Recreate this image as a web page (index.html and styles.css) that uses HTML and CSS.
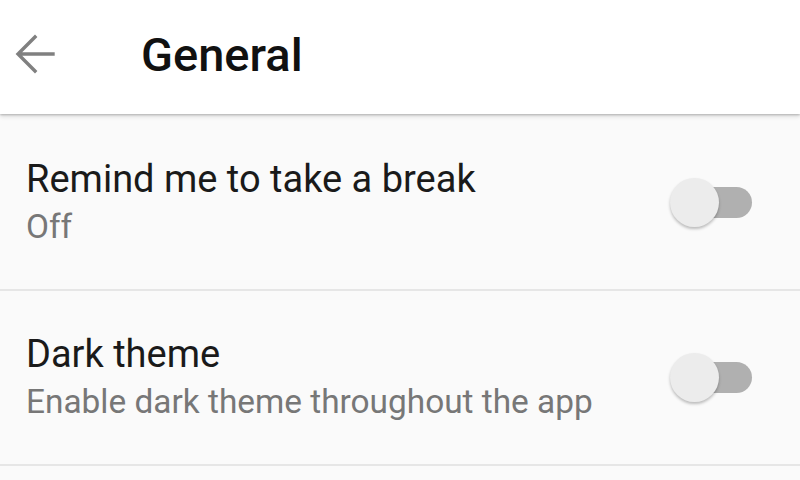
FILE: index.html
```html
<!DOCTYPE html>
<html lang="en">
<head>
  <meta charset="UTF-8" />
  <meta name="viewport" content="width=device-width, initial-scale=1.0" />
  <title>General</title>
  <link rel="stylesheet" href="styles.css">
</head>
<body>

  <header class="toolbar">
    <button class="back" aria-label="Back">
      <svg width="40" height="40" viewBox="0 0 40 40">
        <path d="M38 20H4 M20 3L3 20L20 37" fill="none" stroke="#808080" stroke-width="3.4" stroke-linecap="square" />
      </svg>
    </button>
    <h1>General</h1>
  </header>

  <main class="settings">
    <div class="row">
      <div class="text">
        <p class="title">Remind me to take a break</p>
        <p class="summary">Off</p>
      </div>
      <div class="switch"><span class="thumb"></span></div>
    </div>

    <div class="row">
      <div class="text">
        <p class="title">Dark theme</p>
        <p class="summary">Enable dark theme throughout the app</p>
      </div>
      <div class="switch"><span class="thumb"></span></div>
    </div>
  </main>

</body>
</html>
```

FILE: styles.css
```css
* {
  margin: 0;
  padding: 0;
  box-sizing: border-box;
}

body {
  width: 800px;
  height: 480px;
  overflow: hidden;
  background: #fafafa;
  font-family: Roboto, 'Noto Sans', sans-serif;
  color: #1a1a1a;
}

.toolbar {
  height: 114px;
  background: #fff;
  display: flex;
  align-items: center;
  padding-left: 15px;
  box-shadow: 0 1px 2px rgba(0, 0, 0, 0.22), 0 3px 4px rgba(0, 0, 0, 0.1);
  position: relative;
  z-index: 1;
}

.back {
  width: 40px;
  height: 40px;
  border: none;
  background: none;
  display: flex;
  margin-top: -6px;
}

.toolbar h1 {
  margin-left: 86px;
  font-size: 47px;
  font-weight: 500;
  color: #111;
  margin-top: -6px;
}

.settings {
  padding-top: 2px;
}

.row {
  height: 175px;
  display: flex;
  align-items: center;
  justify-content: space-between;
  padding: 0 48px 0 26px;
  border-bottom: 2px solid #e6e6e6;
}

.title {
  font-size: 38px;
  line-height: 48px;
  color: #1a1a1a;
}

.summary {
  font-size: 33.4px;
  line-height: 48px;
  color: #777;
}

.switch {
  position: relative;
  width: 72px;
  height: 31px;
  background: #b0b0b0;
  border-radius: 16px;
}

.thumb {
  position: absolute;
  left: -10px;
  top: -9px;
  width: 49px;
  height: 49px;
  border-radius: 50%;
  background: #ececec;
  box-shadow: 0 2px 3px rgba(0, 0, 0, 0.25);
}
```
